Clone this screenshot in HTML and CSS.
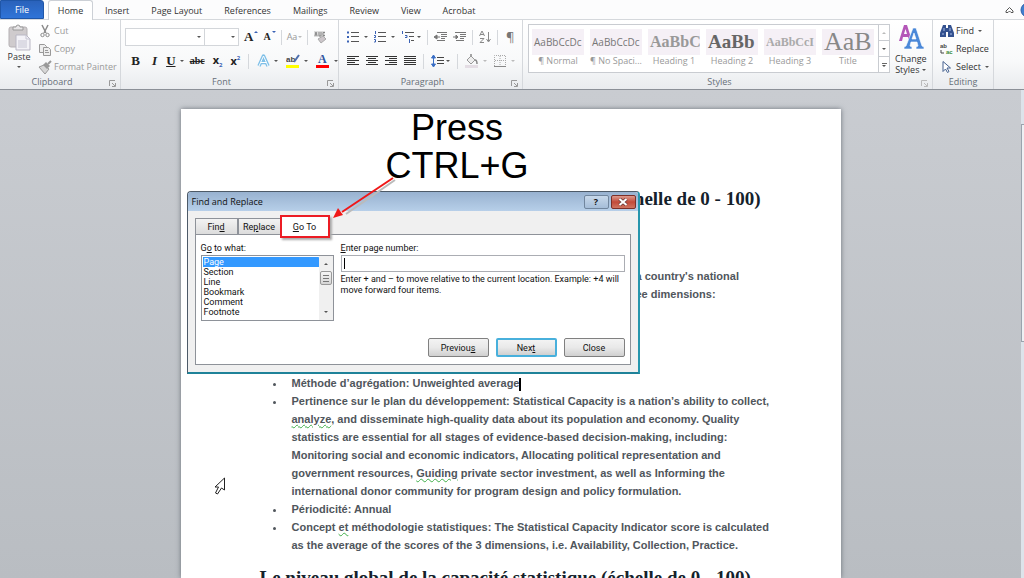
FILE: index.html
```
<!DOCTYPE html>
<html lang="en">
<head>
    <meta charset="UTF-8">
    <meta name="viewport" content="width=device-width, initial-scale=1.0">
    <title>Find and Replace</title>
    <link rel="stylesheet" href="styles.css">
</head>
<body>
    <nav class="tabs">
        <button class="tab file">File</button>
        <button class="tab active">Home</button>
        <button class="tab">Insert</button>
        <button class="tab">Page Layout</button>
        <button class="tab">References</button>
        <button class="tab">Mailings</button>
        <button class="tab">Review</button>
        <button class="tab">View</button>
        <button class="tab">Acrobat</button>
        <div class="tab-tools">
            <svg width="9" height="8" viewBox="0 0 9 8"><path d="M1 5 4.500 1.500 8 5v1.500H6L4.500 5 3 6.500H1z" fill="#fff" stroke="#555"/></svg>
            <svg width="16" height="16" viewBox="0 0 16 16"><circle cx="8" cy="8" r="7" fill="#3f7fd0" stroke="#2d5fa8"/></svg>
        </div>
    </nav>

    <div class="ribbon">
        <section class="group clipboard">
            <div class="group-body">
                <button class="big">
                    <svg width="26" height="27" viewBox="0 0 26 27"><rect x="3" y="3" width="18" height="20" rx="2" fill="#cfcbcd" stroke="#b5b1b4"/><path d="M7 6V3h3a2 2 0 0 1 4 0h3v3z" fill="#e8e6e8" stroke="#999"/><path d="M10 11h10l4 4v11H10z" fill="#f3f2f7" stroke="#b9b7c4"/><path d="M20 11v4h4M12 17h9M12 19h9M12 21h9M12 23h9" fill="none" stroke="#c6c5d2"/></svg>
                    Paste
                    <i class="caret"></i>
                </button>
                <div class="stack">
                    <button class="line off"><svg width="14" height="14" viewBox="0 0 14 14" fill="none" stroke="#8a8a8a"><path d="M4 1l4 8M10 1 6 9" stroke-width="1.500"/><circle cx="4.500" cy="11" r="1.700"/><circle cx="9.500" cy="11" r="1.700"/></svg>Cut</button>
                    <button class="line off"><svg width="14" height="14" viewBox="0 0 14 14" fill="#eee" stroke="#999"><path d="M1.500 2.500h5l2 2v6h-7z"/><path d="M5.500 5.500h5l2 2v6h-7z"/><path d="M7 8.500h3M7 10.500h4"/></svg>Copy</button>
                    <button class="line off"><svg width="14" height="14" viewBox="0 0 14 14"><path d="M1 7l5-2 5 4-4 5z" fill="#d6d6d6" stroke="#999"/><path d="M5 5l3-3 4 4-3 3z" fill="#999"/><path d="M10 4l3-3" stroke="#999" stroke-width="2"/></svg>Format Painter</button>
                </div>
            </div>
            <div class="group-name">Clipboard<svg class="launch" width="7" height="7" viewBox="0 0 7 7" fill="none" stroke="#999"><path d="M.5 6V.5H6M3 3l3 3M6.500 3v3.500H3"/></svg></div>
        </section>

        <section class="group font">
            <div class="group-body rows">
                <div class="row">
                    <span class="combo name"><select aria-label="Font"><option></option></select><i class="caret"></i></span>
                    <span class="combo size"><select aria-label="Font size"><option></option></select><i class="caret"></i></span>
                    <button class="tool wide" aria-label="Grow font"><b class="serif lg">A</b><i class="mark up"></i></button>
                    <button class="tool wide" aria-label="Shrink font"><b class="serif">A</b><i class="mark down"></i></button>
                    <i class="sep"></i>
                    <button class="tool wide off">Aa<i class="caret"></i></button>
                    <i class="sep"></i>
                    <button class="tool" aria-label="Clear formatting"><svg width="14" height="14" viewBox="0 0 14 14"><path d="M1 1h11v6H1z" fill="#ddd"/><path d="M2 6l1-4 1 4M6 2v4h2V2M12 2.500h-2v3h2" fill="none" stroke="#888"/><path d="M5 9l5-3 3 3-5 4z" fill="#ccc6ca" stroke="#aaa"/></svg></button>
                </div>
                <div class="row format">
                    <button class="tool serif lg"><b>B</b></button>
                    <button class="tool serif lg"><b><em>I</em></b></button>
                    <button class="tool serif lg"><b><u>U</u></b><i class="caret"></i></button>
                    <button class="tool serif"><b><s>abc</s></b></button>
                    <button class="tool script"><b>x<sub>2</sub></b></button>
                    <button class="tool script"><b>x<sup>2</sup></b></button>
                    <i class="sep"></i>
                    <button class="tool" aria-label="Text effects"><svg width="13" height="14" viewBox="0 0 13 14"><path d="M2 12 6.500 2 11 12M4 8.500h5" fill="none" stroke="#7fc0e8" stroke-width="3.500" stroke-linejoin="round"/><path d="M2 12 6.500 2 11 12M4 8.500h5" fill="none" stroke="#fff"/></svg><i class="caret"></i></button>
                    <button class="tool" aria-label="Highlight"><svg width="14" height="14" viewBox="0 0 14 14"><text x="0" y="8" class="svg-ab">ab</text><path d="M13 1 8 8" stroke="#4d6fae" stroke-width="2"/><path d="M0 11h13v3H0z" fill="#ff0"/></svg><i class="caret"></i></button>
                    <button class="tool" aria-label="Font colour"><svg width="14" height="14" viewBox="0 0 14 14"><text x="2" y="9" class="svg-a">A</text><path d="M0 11h13v3H0z" fill="red"/></svg><i class="caret"></i></button>
                </div>
            </div>
            <div class="group-name">Font<svg class="launch" width="7" height="7" viewBox="0 0 7 7" fill="none" stroke="#999"><path d="M.5 6V.5H6M3 3l3 3M6.500 3v3.500H3"/></svg></div>
        </section>

        <section class="group paragraph">
            <div class="group-body rows">
                <div class="row">
                    <button class="tool" aria-label="Bullets"><svg width="12" height="12" viewBox="0 0 12 12"><path d="M0 1.500h2M0 6h2M0 10.500h2" stroke="#3a62b5" stroke-width="2"/><path d="M4 1.500h8M4 5.500h8M4 10.500h8" stroke="#555"/></svg><i class="caret"></i></button>
                    <button class="tool" aria-label="Numbering"><svg width="12" height="12" viewBox="0 0 12 12"><path d="M1.500 0v3M0 4.500h1.500v2H0M0 8.500h1.500V11H0" stroke="#3a62b5" fill="none"/><path d="M4 1.500h8M4 5.500h8M4 10.500h8" stroke="#555"/></svg><i class="caret"></i></button>
                    <button class="tool tight" aria-label="Multilevel list"><svg width="14" height="12" viewBox="0 0 14 12"><path d="M1.500 0v3M4 4.500h2v2H4M8.500 8v4" stroke="#3a62b5" fill="none"/><path d="M4 1.500h9M8 5.500h5M10 9.500h3" stroke="#555"/></svg><i class="caret"></i></button>
                    <i class="sep"></i>
                    <button class="tool" aria-label="Decrease indent"><svg width="13" height="12" viewBox="0 0 13 12" stroke="#777"><path d="M3 1.500h10M7 3.500h6M7 5.500h6M7 7.500h4M3 9.500h8"/><path d="M0 6l3-2v4zM3 6h3" fill="#777"/></svg></button>
                    <button class="tool" aria-label="Increase indent"><svg width="13" height="12" viewBox="0 0 13 12" stroke="#777"><path d="M2 1.500h11M7 3.500h6M7 5.500h6M7 7.500h4M3 9.500h8"/><path d="M5 6 3 4v4zM0 6h3" fill="#777"/></svg></button>
                    <i class="sep"></i>
                    <button class="tool" aria-label="Sort"><svg width="12" height="14" viewBox="0 0 12 14" fill="none" stroke="#888"><path d="M.5 6 3 1l2.500 5M1 4.500h4M1 8.500h4l-4 4h4M9.500 2v9M7.500 9l2 3 2-3"/></svg></button>
                    <i class="sep"></i>
                    <button class="tool pilcrow">¶</button>
                </div>
                <div class="row align">
                    <button class="tool" aria-label="Align left"><svg width="12" height="10" viewBox="0 0 12 10" stroke="#333"><path d="M0 .5h12M0 2.500h8M0 4.500h12M0 6.500h8M0 8.500h12"/></svg></button>
                    <button class="tool" aria-label="Centre"><svg width="12" height="10" viewBox="0 0 12 10" stroke="#333"><path d="M0 .5h12M2 2.500h8M0 4.500h12M2 6.500h8M0 8.500h12"/></svg></button>
                    <button class="tool" aria-label="Align right"><svg width="12" height="10" viewBox="0 0 12 10" stroke="#333"><path d="M0 .5h12M4 2.500h8M0 4.500h12M4 6.500h8M0 8.500h12"/></svg></button>
                    <button class="tool" aria-label="Justify"><svg width="12" height="10" viewBox="0 0 12 10" stroke="#333"><path d="M0 .5h12M0 2.500h12M0 4.500h12M0 6.500h12M0 8.500h12"/></svg></button>
                    <i class="sep"></i>
                    <button class="tool tight" aria-label="Line spacing"><svg width="13" height="14" viewBox="0 0 13 14"><path d="M2.500 2v10M.5 4l2-3 2 3zM.5 10l2 3 2-3z" fill="#3a6fc5" stroke="#3a6fc5"/><path d="M6 3.500h7M6 6.500h7M6 9.500h7" stroke="#444"/></svg><i class="caret"></i></button>
                    <i class="sep"></i>
                    <button class="tool off" aria-label="Shading"><svg width="13" height="14" viewBox="0 0 13 14"><path d="M2 6l4-4 4 4-4 4z" fill="#eee" stroke="#999"/><path d="M6 2V0M10 6q2 0 2 4" fill="none" stroke="#888" stroke-width="1.500"/><path d="M0 11h13v3H0z" fill="#e4dde4"/></svg><i class="caret"></i></button>
                    <button class="tool off" aria-label="Borders"><svg width="12" height="12" viewBox="0 0 12 12" fill="none" stroke="#aaa"><path d="M.5 11V.5h11V11M6 1v10M1 5.500h10" stroke-dasharray="1 1"/><path d="M0 11.500h12" stroke="#888"/></svg><i class="caret"></i></button>
                </div>
            </div>
            <div class="group-name">Paragraph<svg class="launch" width="7" height="7" viewBox="0 0 7 7" fill="none" stroke="#999"><path d="M.5 6V.5H6M3 3l3 3M6.500 3v3.500H3"/></svg></div>
        </section>

        <section class="group styles">
            <div class="group-body">
                <div class="gallery">
                    <button class="style"><span class="sample">AaBbCcDc</span>¶ Normal</button>
                    <button class="style"><span class="sample">AaBbCcDc</span>¶ No Spaci...</button>
                    <button class="style"><span class="sample h1">AaBbC</span>Heading 1</button>
                    <button class="style"><span class="sample h2">AaBb</span>Heading 2</button>
                    <button class="style"><span class="sample h3">AaBbCcI</span>Heading 3</button>
                    <button class="style"><span class="sample title">AaB</span>Title</button>
                    <div class="spinner">
                        <button class="off" aria-label="Previous styles"><i class="caret flip"></i></button>
                        <button aria-label="More rows"><i class="caret"></i></button>
                        <button aria-label="All styles"><i class="bar"></i><i class="caret"></i></button>
                    </div>
                </div>
                <button class="big change">
                    <svg width="26" height="26" viewBox="0 0 26 26"><path d="M1 17h3l1-4h5l1 4h3L9 1H6z M6 10l1.500-5L9 10z" fill="#b457b8" fill-rule="evenodd"/><path d="M6 25v-2l2-1 7-18h3l6 18 2 1v2h-8v-2l2-1-1-4h-6l-1 4 2 1v2z M14 15h4l-2-6z" fill="#4a88d8" stroke="#fff" stroke-width=".6" fill-rule="evenodd"/></svg>
                    Change
                    <span class="with-caret">Styles <i class="caret"></i></span>
                </button>
            </div>
            <div class="group-name">Styles<svg class="launch" width="7" height="7" viewBox="0 0 7 7" fill="none" stroke="#bbb"><path d="M.5 6V.5H6M3 3l3 3M6.500 3v3.500H3"/></svg></div>
        </section>

        <section class="group editing">
            <div class="group-body">
                <div class="stack">
                    <button class="line"><svg width="14" height="12" viewBox="0 0 14 12"><path d="M3 0h3v3h2V0h3l3 8v4H8V7H6v5H0V8z" fill="#33518f"/><path d="M2 9h2M10 9h2M4 3v3M10 3v3" stroke="#a9bde6"/></svg>Find <i class="caret"></i></button>
                    <button class="line"><svg width="14" height="12" viewBox="0 0 14 12"><text x="0" y="5" class="svg-ab small">ab</text><text x="6" y="11" class="svg-ab small green">ac</text><path d="M1 7v3h3" fill="none" stroke="#444"/></svg>Replace</button>
                    <button class="line"><svg width="14" height="12" viewBox="0 0 14 12"><path d="M3 .5v10l2.500-2.500 2 3.500 1.500-1-2-3.500h3.500z" fill="#fff" stroke="#44618f"/></svg>Select <i class="caret"></i></button>
                </div>
            </div>
            <div class="group-name">Editing</div>
        </section>
    </div>

    <main class="workspace">
        <article class="page">
            <h2 class="first">helle de 0 - 100)</h2>
            <p class="excerpt">a country's national<br>ee dimensions:</p>
            <ul>
                <li>Méthode d’agrégation: Unweighted average<i class="cursor"></i></li>
                <li>Pertinence sur le plan du développement: Statistical Capacity is a nation’s ability to collect,<br>
                    <span class="check">analyze</span>, and disseminate high-quality data about its population and economy. Quality<br>
                    statistics are essential for all stages of evidence-based decision-making, including:<br>
                    Monitoring social and economic indicators, Allocating political representation and<br>
                    government resources, <span class="check">Guiding</span> private sector investment, as well as Informing the<br>
                    international donor community for program design and policy formulation.</li>
                <li>Périodicité: Annual</li>
                <li>Concept <span class="check">et</span> méthodologie statistiques: The Statistical Capacity Indicator score is calculated<br>
                    as the average of the scores of the 3 dimensions, i.e. Availability, Collection, Practice.</li>
            </ul>
            <h2>Le niveau global de la capacité statistique (échelle de 0 - 100)</h2>

            <div class="dialog" role="dialog" aria-labelledby="dialogTitle">
                <header>
                    <span id="dialogTitle">Find and Replace</span>
                    <button class="win help">?</button>
                    <button class="win close" aria-label="Close window"><svg width="10" height="8" viewBox="0 0 10 8"><path d="M1.500 1l7 6M8.500 1l-7 6" stroke="#6b3a38" stroke-width="3.500"/><path d="M1.500 1l7 6M8.500 1l-7 6" stroke="#fff" stroke-width="2"/></svg></button>
                </header>
                <div class="dialog-tabs">
                    <button>Fin<u>d</u></button>
                    <button>Re<u>p</u>lace</button>
                    <button class="current"><u>G</u>o To</button>
                </div>
                <div class="panel">
                    <div class="fields">
                        <div class="what">
                            <label for="what">G<u>o</u> to what:</label>
                            <div class="listbox">
                                <select id="what" size="6">
                                    <option selected>Page</option>
                                    <option>Section</option>
                                    <option>Line</option>
                                    <option>Bookmark</option>
                                    <option>Comment</option>
                                    <option>Footnote</option>
                                </select>
                                <div class="scroll"><i class="caret flip"></i><i class="thumb"></i><i class="caret end"></i></div>
                            </div>
                        </div>
                        <div class="number">
                            <label for="number"><u>E</u>nter page number:</label>
                            <div class="entry"><input type="text" id="number"><i class="cursor thin"></i></div>
                            <p>Enter + and – to move relative to the current location. Example: +4 will<br>move forward four items.</p>
                        </div>
                    </div>
                    <div class="actions">
                        <button>Previou<u>s</u></button>
                        <button class="default">Nex<u>t</u></button>
                        <button>Close</button>
                    </div>
                </div>
            </div>

            <div class="callout">Press<br>CTRL+G</div>
            <svg class="arrow" width="80" height="56" viewBox="0 0 80 56"><path d="M67 9 18 43" stroke="#bbb" stroke-width="2"/><path d="M65 7 14 41" stroke="#f01818" stroke-width="2"/><path d="M5 47l5-10 5 7z" fill="#f01818"/></svg>
            <svg class="pointer" width="12" height="18" viewBox="0 0 12 18"><path d="M10.500 1v12l-3-2-4 6-2-1 3-6H1z" fill="#fff" stroke="#222"/></svg>
        </article>
        <div class="page-scroll"><i></i></div>
    </main>
</body>
</html>
```
FILE: styles.css
```
* {
    box-sizing: border-box;
}
body {
    margin: 0;
    height: 100vh;
    overflow: hidden;
    display: flex;
    flex-direction: column;
    font-family: "Open Sans", "Noto Sans", sans-serif;
    font-size: 9px;
    line-height: 12px;
    color: #333;
    background: #fcfcfd;
}
button {
    font: inherit;
    color: inherit;
    background: none;
    border: 0;
    padding: 0;
    white-space: nowrap;
}
svg {
    display: block;
    flex: none;
}
.caret {
    display: inline-block;
    flex: none;
    border: 2px solid transparent;
    border-top-color: #555;
    border-bottom: 0;
}
.caret.flip {
    transform: rotate(180deg);
}
.off {
    color: #999;
}
.off .caret {
    border-top-color: #bbb;
}

/* tab strip */
.tabs {
    display: flex;
    height: 20px;
    flex: none;
    border-bottom: 1px solid #d5d8dc;
}
.tab {
    padding: 2px 11px 0;
}
.tab.file {
    width: 44px;
    margin-right: 4px;
    padding: 0;
    color: #fff;
    background: linear-gradient(#2a62bb, #2f74d8);
    border: 1px solid #1f56a8;
    border-radius: 0 3px 0 0;
}
.tab.active {
    height: 20px;
    width: 45px;
    padding: 0;
    margin-right: 1px;
    background: #fff;
    border: 1px solid #ccd0d6;
    border-bottom: 0;
    border-radius: 3px 3px 0 0;
}
.tab-tools {
    margin-left: auto;
    margin-right: -12px;
    display: flex;
    align-items: center;
    gap: 6px;
}

/* ribbon */
.ribbon {
    display: flex;
    height: 70px;
    flex: none;
    background: linear-gradient(#fff, #f8f9fa 60%, #e9ebee);
    border-bottom: 1px solid #8b9097;
}
.group {
    display: flex;
    flex-direction: column;
    border-right: 1px solid #d5d8dc;
}
.group-body {
    display: flex;
    height: 56px;
}
.clipboard {
    width: 121px;
}
.clipboard .group-body {
    padding-left: 6px;
}
.font {
    width: 218px;
}
.font .group-body {
    padding-left: 4px;
}
.paragraph {
    width: 184px;
}
.paragraph .group-body {
    padding-left: 8px;
}
.styles {
    width: 410px;
}
.styles .group-body {
    padding-left: 5px;
}
.editing {
    width: 61px;
}
.editing .group-body {
    padding-left: 7px;
}
.group-name {
    display: flex;
    justify-content: center;
    position: relative;
    padding-right: 16px;
    color: #666e78;
}
.editing .group-name {
    padding-right: 0;
}
.launch {
    position: absolute;
    right: 4px;
    top: 4px;
}
.big {
    display: flex;
    flex-direction: column;
    align-items: center;
    padding-top: 4px;
}
.big > .caret {
    margin-top: 3px;
}
.stack {
    display: flex;
    flex-direction: column;
    padding-top: 2px;
    margin-left: 6px;
}
.editing .stack {
    margin-left: 0;
}
.line {
    display: flex;
    align-items: center;
    gap: 2px;
    height: 18px;
}
.line .caret {
    margin-left: 2px;
}

/* font and paragraph tools */
.group-body.rows {
    flex-direction: column;
    gap: 6px;
    padding-top: 8px;
}
.row {
    display: flex;
    align-items: center;
    height: 18px;
    gap: 5px;
}
.paragraph .row {
    gap: 6px;
}
.paragraph .align {
    gap: 7px;
}
.row.format {
    gap: 8px;
    padding-left: 5px;
}
.tool {
    display: flex;
    align-items: center;
    gap: 5px;
}
.tool.tight {
    gap: 2px;
}
.tool.serif,
.tool .serif {
    font-family: "Liberation Serif", serif;
    font-size: 10px;
    color: #222;
}
.tool.lg,
.tool .lg {
    font-size: 13px;
}
.tool.script {
    font-size: 11px;
    color: #222;
}
.tool sub,
.tool sup {
    font-size: 6px;
    line-height: 6px;
    color: #3a62b5;
}
.format .tool {
    gap: 4px;
}
.format .tool.lg {
    min-width: 11px;
    justify-content: center;
}
.tool.wide {
    gap: 1px;
}
.mark {
    align-self: flex-start;
    border: 2px solid transparent;
}
.mark.up {
    border-top: 0;
    border-bottom-color: #3a62b5;
}
.mark.down {
    border-bottom: 0;
    border-top-color: #3a62b5;
}
.sep {
    width: 1px;
    height: 15px;
    background: #d5d8dc;
}
.pilcrow {
    font-size: 13px;
    color: #777;
    margin-left: 2px;
}
.combo {
    position: relative;
    height: 18px;
    display: flex;
    align-items: center;
}
.combo.name {
    width: 80px;
    margin-right: -6px;
}
.combo.size {
    width: 35px;
}
.combo select {
    appearance: none;
    width: 100%;
    height: 100%;
    background: #fff;
    border: 1px solid #d3d6da;
    border-radius: 0;
}
.combo .caret {
    position: absolute;
    right: 4px;
}
.svg-ab {
    font: bold 8px "Liberation Sans", sans-serif;
    fill: #444;
}
.svg-ab.small {
    font-size: 6px;
}
.svg-ab.green {
    fill: #3a8a3a;
}
.svg-a {
    font: bold 12px "Liberation Serif", serif;
    fill: #2f559f;
}

/* style gallery */
.gallery {
    display: flex;
    gap: 6px;
    height: 49px;
    margin-top: 4px;
    padding-left: 3px;
    border: 1px solid #c9ccd1;
    background: #fff;
}
.style {
    width: 52px;
    padding-top: 4px;
    display: flex;
    flex-direction: column;
    align-items: center;
    color: #999;
}
.sample {
    width: 52px;
    height: 26px;
    line-height: 26px;
    padding: 0 2px;
    overflow: hidden;
    text-align: left;
    background: #f5f0f6;
    font-size: 10px;
    color: #777;
}
.sample.h1,
.sample.h2,
.sample.h3,
.sample.title {
    font-family: "Liberation Serif", serif;
    font-weight: bold;
    color: #999;
}
.sample.h1 {
    font-size: 16px;
}
.sample.h2 {
    font-size: 19px;
    color: #666;
}
.sample.h3 {
    font-size: 12px;
    color: #aaa;
}
.sample.title {
    font-size: 26px;
    font-weight: normal;
    color: #888;
}
.spinner {
    width: 11px;
    margin-left: -2px;
    display: flex;
    flex-direction: column;
    border-left: 1px solid #c9ccd1;
}
.spinner button {
    flex: 1;
    display: flex;
    flex-direction: column;
    align-items: center;
    justify-content: center;
    gap: 1px;
}
.spinner button + button {
    border-top: 1px solid #c9ccd1;
}
.bar {
    width: 5px;
    height: 1px;
    background: #666;
}
.change {
    margin-left: 5px;
    line-height: 11px;
}
.change svg {
    margin-bottom: 3px;
}
.with-caret {
    display: flex;
    align-items: center;
    gap: 3px;
}

/* document */
.workspace {
    flex: 1;
    min-height: 0;
    display: flex;
    justify-content: center;
    background: linear-gradient(#c9ccd1, #b9bdc2);
    overflow: hidden;
}
.page {
    position: relative;
    width: 660px;
    margin: 19px auto 0;
    padding: 79px 80px 0 79px;
    background: #fff;
    box-shadow: 0 0 5px #6b7078;
    font: bold 11px/18px "Liberation Sans", sans-serif;
    color: #50565c;
}
.page h2 {
    margin: 0;
    font: bold 19px/22px "Liberation Serif", serif;
    color: #14212b;
    white-space: nowrap;
}
.page .first {
    text-align: right;
}
.page ul {
    margin: 0 0 13px;
    padding-left: 26px;
    white-space: nowrap;
}
.page li {
    padding-left: 6px;
}
.excerpt {
    margin: 57px 0 71px 376px;
    white-space: nowrap;
}
.check {
    text-decoration: underline wavy #3fae49 1px;
    text-underline-offset: 1px;
}
.cursor {
    display: inline-block;
    width: 2px;
    height: 13px;
    background: #000;
    vertical-align: middle;
}

/* find and replace window */
.dialog {
    position: absolute;
    left: 6px;
    top: 82px;
    width: 453px;
    height: 183px;
    display: flex;
    flex-direction: column;
    padding: 0 7px 7px;
    background: #f0f0f0;
    border: 1px solid #4d5a68;
    border-right: 2px solid #2796ad;
    border-bottom: 2px solid #1f8299;
    border-radius: 4px 4px 0 0;
    font: 9px/12px Roboto, sans-serif;
    color: #111;
}
.dialog header {
    display: flex;
    align-items: center;
    gap: 2px;
    height: 19px;
    margin: 0 -7px;
    padding: 1px 2px 0 4px;
    background: linear-gradient(#98b2d0, #b7cfe9);
    border-radius: 3px 3px 0 0;
    font-family: "Open Sans", "Noto Sans", sans-serif;
}
.dialog header span {
    margin-right: auto;
}
.win {
    width: 25px;
    height: 14px;
    display: flex;
    align-items: center;
    justify-content: center;
    border: 1px solid #71869e;
    border-radius: 2px;
    background: linear-gradient(#c7d8ea, #a5bdd8);
    font-weight: bold;
}
.win.close {
    border-color: #7c2f28;
    background: linear-gradient(#dd9a8e, #c24a39 50%, #cf7460);
}
.dialog-tabs {
    display: flex;
    height: 23px;
    align-items: flex-end;
}
.dialog-tabs button {
    width: 43px;
    height: 16px;
    background: linear-gradient(#f3f3f3, #dcdcdc);
    border: 1px solid #8e9299;
    border-bottom: 0;
}
.dialog-tabs .current {
    width: 50px;
    height: 23px;
    margin-left: -1px;
    margin-bottom: -4px;
    background: #fff;
    border: 2px solid #ec1c24;
    box-shadow: 2px 2px 2px #aaa;
    z-index: 1;
}
.panel {
    flex: 1;
    display: flex;
    flex-direction: column;
    justify-content: space-between;
    padding: 7px 5px 7px;
    background: #fff;
    border: 1px solid #8e9299;
}
.fields {
    display: flex;
    gap: 7px;
}
.fields label {
    display: block;
    margin-bottom: 1px;
}
.what {
    flex: none;
    width: 133px;
}
.listbox {
    display: flex;
    height: 66px;
    border: 1px solid #8e9299;
}
.listbox select {
    flex: 1;
    padding: 1px 0 0 1px;
    border: 0;
    outline: 0;
    background: #fff;
    font: inherit;
    color: inherit;
    overflow: hidden;
}
.listbox option {
    padding: 0 1px;
    min-height: 0;
}
.listbox option:checked {
    background: linear-gradient(#39f, #39f);
    -webkit-text-fill-color: #fff;
}
.scroll {
    width: 14px;
    display: flex;
    flex-direction: column;
    align-items: center;
    padding: 7px 0;
    background: #f0f0f0;
}
.thumb {
    display: flex;
    align-items: center;
    justify-content: center;
    width: 12px;
    height: 14px;
    margin-top: 6px;
    border: 1px solid #999;
    border-radius: 2px;
    background: linear-gradient(#f5f5f5, #d5d5d5);
}
.thumb::before {
    content: "";
    width: 6px;
    height: 7px;
    background: repeating-linear-gradient(#777 0 1px, transparent 1px 3px);
}
.scroll .end {
    margin-top: auto;
}
.number {
    flex: 1;
}
.number p {
    margin: 2px 0 0;
    line-height: 11px;
    white-space: nowrap;
}
.entry {
    position: relative;
}
.entry input {
    display: block;
    width: 100%;
    height: 17px;
    padding: 0 2px;
    border: 1px solid #abadb3;
    font: inherit;
}
.thin {
    position: absolute;
    left: 3px;
    top: 3px;
    width: 1px;
    height: 11px;
}
.actions {
    display: flex;
    justify-content: flex-end;
    gap: 7px;
}
.actions button {
    width: 61px;
    height: 19px;
    border: 1px solid #808080;
    border-radius: 2px;
    background: linear-gradient(#f3f3f3, #e9e9e9 50%, #d0d0d0);
}
.actions .default {
    border: 2px solid #48b0dc;
}

/* annotation */
.callout {
    position: absolute;
    left: 205px;
    top: 0;
    font: 36px/38px "Liberation Sans", sans-serif;
    color: #000;
    text-align: center;
}
.arrow {
    position: absolute;
    left: 147px;
    top: 62px;
}
.pointer {
    position: absolute;
    left: 33px;
    top: 368px;
}
.page-scroll {
    width: 3px;
    padding-top: 34px;
    background: #dde3ea;
}
.page-scroll i {
    display: block;
    height: 218px;
    border: 1px solid #9aa3ad;
    border-right: 0;
    background: #eef0f3;
}
```
